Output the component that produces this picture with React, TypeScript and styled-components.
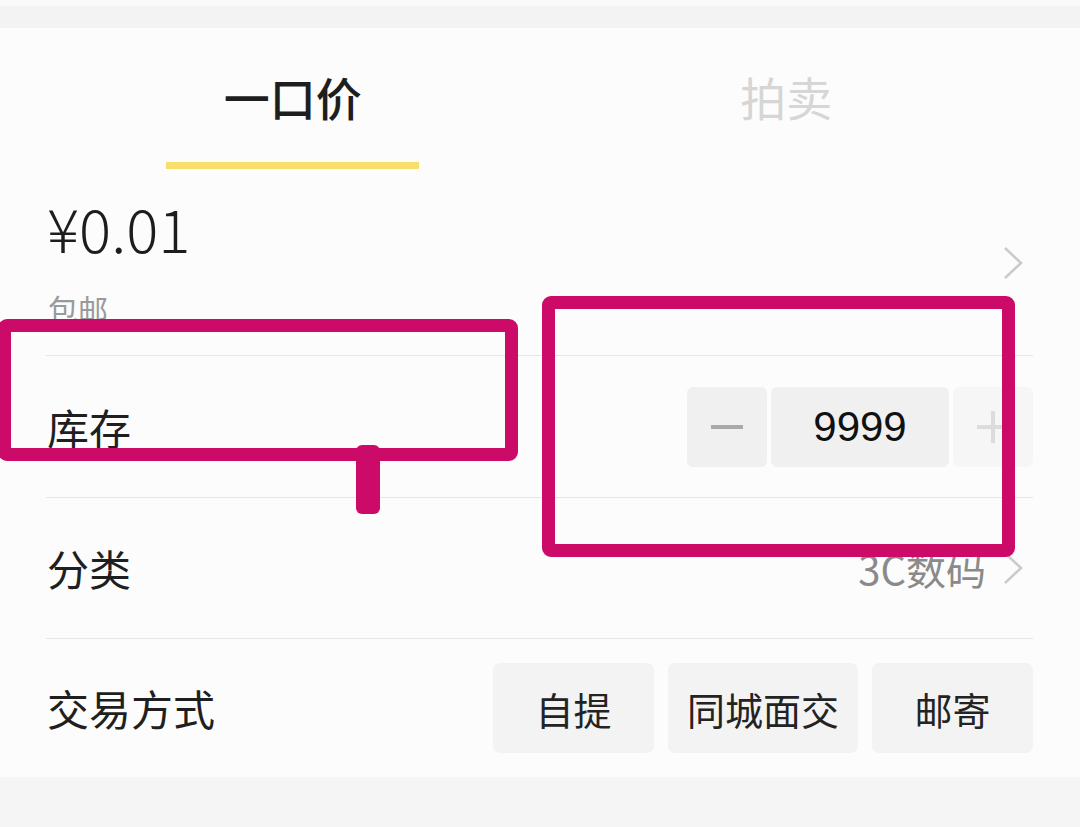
import React from "react";
import styled, { createGlobalStyle } from "styled-components";

const Global = createGlobalStyle`
  html, body { margin: 0; padding: 0; background: #f5f5f5; }
  body { font-family: "Noto Sans CJK SC", "Noto Sans", sans-serif; color: #1f1f1f; }
  * { box-sizing: border-box; }
`;

const Page = styled.div`
  position: relative;
  width: 1080px;
  height: 827px;
  overflow: hidden;
  background: #f5f5f5;
`;

const TopStrip = styled.div`
  height: 6px;
  background: #fafafa;
`;

const GraySpacer = styled.div`
  height: 22px;
  background: #f3f3f3;
`;

const Card = styled.div`
  background: #fcfcfc;
  padding: 0 47px 0 46px;
`;

const Tabs = styled.div`
  display: grid;
  grid-template-columns: 1fr 1fr;
`;

const Tab = styled.div<{ $active?: boolean }>`
  display: flex;
  flex-direction: column;
  align-items: center;
  padding-top: 45px;
  font-size: 46px;
  line-height: 46px;
  font-weight: ${(p) => (p.$active ? 500 : 400)};
  color: ${(p) => (p.$active ? "#1e1e1e" : "#d6d6d6")};
`;

const Underline = styled.div<{ $show?: boolean }>`
  margin-top: 43px;
  width: 253px;
  height: 7px;
  background: ${(p) => (p.$show ? "#f6df6b" : "transparent")};
`;

const PriceRow = styled.div`
  display: flex;
  align-items: center;
  justify-content: space-between;
  height: 186px;
  padding-top: 2px;
`;

const PriceBlock = styled.div`
  display: flex;
  flex-direction: column;
  gap: 36px;
`;

const Price = styled.div`
  font-family: "Noto Sans CJK SC", "Noto Sans", sans-serif;
  font-size: 60px;
  line-height: 60px;
  font-weight: 300;
  color: #1d1d1d;
  margin-left: 1px;
  margin-top: -6px;
`;

const SubText = styled.div`
  font-size: 30px;
  line-height: 30px;
  color: #9a9a9a;
  margin-left: 2px;
`;

const Row = styled.div<{ $h: number }>`
  display: flex;
  align-items: center;
  justify-content: space-between;
  height: ${(p) => p.$h}px;
  border-top: 1.5px solid #e6e6e6;
`;

const Label = styled.div`
  font-size: 42px;
  line-height: 42px;
  color: #1f1f1f;
  margin-left: 1px;
`;

const Stepper = styled.div`
  display: flex;
  gap: 4px;
  height: 80px;
`;

const StepBtn = styled.div<{ $w: number; $bg: string }>`
  width: ${(p) => p.$w}px;
  background: ${(p) => p.$bg};
  border-radius: 6px;
  display: flex;
  align-items: center;
  justify-content: center;
`;

const StepValue = styled.span`
  font-family: "Liberation Sans", "Noto Sans", sans-serif;
  font-size: 42px;
  color: #111;
`;

const ValueLink = styled.div`
  display: flex;
  align-items: center;
  gap: 16px;
  font-size: 40px;
  color: #8a8a8a;
`;

const ChevronBox = styled.span`
  display: flex;
  margin-right: 9px;
`;

const Options = styled.div`
  display: flex;
  gap: 14px;
`;

const Option = styled.div<{ $w: number }>`
  width: ${(p) => p.$w}px;
  height: 90px;
  background: #f3f3f3;
  border-radius: 7px;
  display: flex;
  align-items: center;
  justify-content: center;
  font-size: 38px;
  color: #232323;
`;

const PinkBox = styled.div`
  position: absolute;
  border: 13px solid #cc0a68;
  border-radius: 9px;
`;

const PinkStem = styled.div`
  position: absolute;
  left: 356px;
  top: 445px;
  width: 24px;
  height: 69px;
  background: #cc0a68;
  border-radius: 6px;
`;

const Chevron = ({ color = "#cbcbcb" }: { color?: string }) => (
  <ChevronBox>
    <svg width="22" height="34" viewBox="0 0 22 34">
      <path d="M3 2 L19 17 L3 32" fill="none" stroke={color} strokeWidth="2.6" />
    </svg>
  </ChevronBox>
);

const Minus = () => (
  <svg width="32" height="6" viewBox="0 0 32 6">
    <rect x="0" y="1" width="32" height="4" fill="#a9a9a9" />
  </svg>
);

const Plus = () => (
  <svg width="32" height="32" viewBox="0 0 32 32">
    <rect x="0" y="14" width="32" height="4" fill="#dcdcdc" />
    <rect x="14" y="0" width="4" height="32" fill="#dcdcdc" />
  </svg>
);

export default function App() {
  return (
    <Page>
      <Global />
      <TopStrip />
      <GraySpacer />
      <Card>
        <Tabs>
          <Tab $active>
            一口价
            <Underline $show />
          </Tab>
          <Tab>
            拍卖
            <Underline />
          </Tab>
        </Tabs>
        <PriceRow>
          <PriceBlock>
            <Price>¥0.01</Price>
            <SubText>包邮</SubText>
          </PriceBlock>
          <Chevron />
        </PriceRow>
        <Row $h={142}>
          <Label>库存</Label>
          <Stepper>
            <StepBtn $w={80} $bg="#f0f0f0">
              <Minus />
            </StepBtn>
            <StepBtn $w={178} $bg="#f0f0f0">
              <StepValue>9999</StepValue>
            </StepBtn>
            <StepBtn $w={80} $bg="#f6f6f6">
              <Plus />
            </StepBtn>
          </Stepper>
        </Row>
        <Row $h={141}>
          <Label>分类</Label>
          <ValueLink>
            3C数码
            <Chevron />
          </ValueLink>
        </Row>
        <Row $h={139}>
          <Label>交易方式</Label>
          <Options>
            <Option $w={161}>自提</Option>
            <Option $w={190}>同城面交</Option>
            <Option $w={161}>邮寄</Option>
          </Options>
        </Row>
      </Card>
      <PinkBox style={{ left: -2, top: 319, width: 520, height: 142 }} />
      <PinkStem />
      <PinkBox style={{ left: 542, top: 296, width: 473, height: 261 }} />
    </Page>
  );
}
